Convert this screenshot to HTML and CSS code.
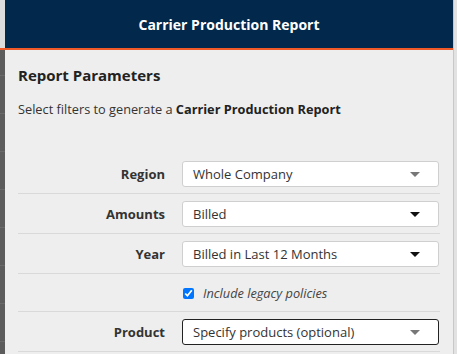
FILE: index.html
```html
<!DOCTYPE html>
<html lang="en">
<head>
<meta charset="UTF-8">
<meta name="viewport" content="width=device-width, initial-scale=1.0">
<title>Carrier Production Report</title>
<link rel="stylesheet" href="styles.css">
</head>
<body>
<div class="side-left">
    <div class="side-left-top"></div>
</div>
<div class="panel">
    <div class="panel-header">Carrier Production Report</div>
    <div class="panel-body">
        <h3>Report Parameters</h3>
        <p class="intro">Select filters to generate a <b>Carrier Production Report</b></p>
        <div class="params">
            <div class="param-row">
                <label>Region</label>
                <div class="picker">
                    <span>Whole Company</span>
                    <svg class="arrow muted" width="10" height="5" viewBox="0 0 10 5"><path d="M0 0H10L5 5Z"/></svg>
                </div>
            </div>
            <div class="param-row">
                <label>Amounts</label>
                <div class="picker">
                    <span>Billed</span>
                    <svg class="arrow" width="10" height="5" viewBox="0 0 10 5"><path d="M0 0H10L5 5Z"/></svg>
                </div>
            </div>
            <div class="param-row">
                <label>Year</label>
                <div class="picker">
                    <span>Billed in Last 12 Months</span>
                    <svg class="arrow" width="10" height="5" viewBox="0 0 10 5"><path d="M0 0H10L5 5Z"/></svg>
                </div>
            </div>
            <div class="param-row check-row">
                <span></span>
                <label class="check"><input type="checkbox" checked> <i>Include legacy policies</i></label>
            </div>
            <div class="param-row">
                <label>Product</label>
                <div class="picker focused">
                    <span>Specify products (optional)</span>
                    <svg class="arrow muted" width="10" height="5" viewBox="0 0 10 5"><path d="M0 0H10L5 5Z"/></svg>
                </div>
            </div>
        </div>
    </div>
</div>
<div class="side-right"></div>
</body>
</html>
```

FILE: styles.css
```css
/* Page frame */
body {
    margin: 0;
    height: 354px;
    overflow: hidden;
    display: flex;
    font-family: "Open Sans", Arial, sans-serif;
    background-color: #eeeeee;
    color: #333;
}
.side-left {
    width: 5px;
    background-color: #5c5c5c;
    background-image: repeating-linear-gradient(to bottom, transparent 0, transparent 37px, #6a6a6a 37px, #6a6a6a 38px);
}
.side-left-top {
    height: 48px;
    background-color: #dddddd;
    border-bottom: 2px solid #f05a28;
}
.side-right {
    flex: 1;
    background-color: #e2e2e2;
    border-left: 1px solid #c8c8c8;
}
.panel {
    width: 448px;
    background-color: #eeeeee;
}
.panel-header {
    height: 48px;
    display: flex;
    align-items: center;
    justify-content: center;
    background-color: #02284b;
    border-bottom: 2px solid #f05a28;
    color: #fff;
    font-size: 14px;
    font-weight: 700;
}
.panel-body {
    padding: 15px 13px 0 13px;
}
h3 {
    margin: 0;
    font-size: 15px;
    line-height: 20px;
    font-weight: 700;
    color: #222;
}
.intro {
    margin: 16px 0 0 0;
    font-size: 12.75px;
    line-height: 17px;
    color: #333;
}
.intro b {
    color: #222;
}
.params {
    margin-top: 36px;
}
.param-row {
    display: grid;
    grid-template-columns: 147px 257px;
    column-gap: 17px;
    align-items: center;
    padding: 7px 0 6px 0;
    border-bottom: 1px solid #d9d9d9;
}
.param-row label {
    text-align: right;
    font-size: 13px;
    font-weight: 700;
    color: #333;
}
.picker {
    height: 24px;
    display: flex;
    align-items: center;
    justify-content: space-between;
    padding: 0 18px 0 10px;
    background-color: #fff;
    border: 1px solid #cfcfcf;
    border-radius: 3px;
    font-size: 13px;
    color: #333;
}
.picker.focused {
    border-color: #222;
}
.arrow {
    fill: #111;
}
.arrow.muted {
    fill: #777;
}
.check-row {
    padding: 5px 0 4px 0;
    height: 28px;
}
.param-row .check {
    display: flex;
    align-items: center;
    gap: 9px;
    text-align: left;
    font-weight: 400;
    font-size: 12.75px;
    color: #444;
}
.check input {
    margin: 0 0 0 1px;
    width: 11px;
    height: 11px;
}
```
